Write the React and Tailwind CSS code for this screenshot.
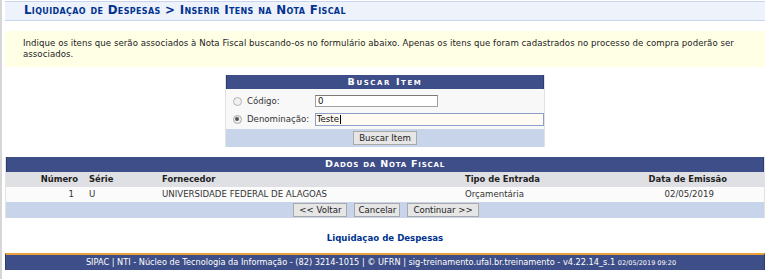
export default function App() {
  const font = "font-['DejaVu_Sans',Verdana,sans-serif]";
  const btn = "h-[14px] border border-[#a9a9a9] bg-[#e6e6e6] text-[8.6px] text-[#222] leading-none";
  return (
    <div className={`relative w-[768px] h-[279px] bg-white ${font} text-[8.6px] text-[#222] overflow-hidden`}>
      <div className="absolute left-0 top-0 bottom-0 w-[2px] bg-[#d6d6d6]" />
      <div className="pl-[5px] pr-[3px] pt-[1px]">
        {/* Title bar */}
        <div className="h-[20px] border-y border-[#c9d5ee] bg-[#eef2fb] flex items-center pl-[19px]">
          <span className="text-[#003390] font-bold [font-variant:small-caps] text-[11.8px] tracking-[0.35px]">
            Liquidaçao de Despesas &gt; Inserir Itens na Nota Fiscal
          </span>
        </div>
        {/* Info box */}
        <div className="mt-[10px] h-[36px] bg-[#ffffe6] pl-[18px] pr-[22px] pt-[7px] leading-[11px] text-[#222] tracking-[0.05px]">
          Indique os itens que serão associados à Nota Fiscal buscando-os no formulário abaixo. Apenas os itens que foram cadastrados no processo de compra poderão ser associados.
        </div>
        {/* Buscar Item */}
        <div className="mt-[8px] mx-auto w-[320px] border-x border-[#e2e2e2]">
          <div className="h-[14px] bg-[#3e4e88] border-x border-[#2e3b6e] flex items-center justify-center text-white font-bold [font-variant:small-caps] text-[9.5px] tracking-[1.6px]">
            Buscar Item
          </div>
          <div className="bg-[#f8f8f8] pt-[6px] pb-[4px]">
            <div className="flex items-center h-[12px]">
              <div className="ml-[7px] w-[9px] h-[9px] rounded-full border border-[#b4b4b4] bg-[#f0f0f0]" />
              <span className="ml-[5px] w-[68px] text-[#333]">Código:</span>
              <div className="w-[123px] h-[12px] border border-[#a0a0a0] border-t-[#7a7a7a] bg-white flex items-center pl-[2px] text-[#111]">0</div>
            </div>
            <div className="flex items-center h-[12px] mt-[6px]">
              <div className="ml-[7px] w-[9px] h-[9px] rounded-full border border-[#a8a8a8] bg-[#eeeeee] flex items-center justify-center">
                <div className="w-[4px] h-[4px] rounded-full bg-[#555]" />
              </div>
              <span className="ml-[5px] w-[68px] text-[#333]">Denominação:</span>
              <div className="w-[230px] h-[13px] border border-[#8aa0c8] bg-[#fffaf2] flex items-center pl-[1px] text-[#111]">
                Teste<span className="w-px h-[9px] bg-black ml-px" />
              </div>
            </div>
          </div>
          <div className="h-[18px] bg-[#c8d4ea] flex items-center justify-center">
            <button className={`${btn} px-[5px]`}>Buscar Item</button>
          </div>
        </div>
        {/* Dados da Nota Fiscal */}
        <div className="mt-[10px] border-x border-[#e2e2e2]">
          <div className="h-[15px] bg-[#3e4e88] border-x border-[#2e3b6e] flex items-center justify-center text-white font-bold [font-variant:small-caps] text-[9.5px] tracking-[0.8px]">
            Dados da Nota Fiscal
          </div>
          <div className="h-[15px] bg-[#dfe0e4] flex items-center font-bold text-[8.4px] text-[#222]">
            <div className="w-[72px] text-right">Número</div>
            <div className="w-[84px] pl-[11px]">Série</div>
            <div className="w-[303px]">Fornecedor</div>
            <div className="w-[180px]">Tipo de Entrada</div>
            <div className="flex-1 text-right pr-[37px]">Data de Emissão</div>
          </div>
          <div className="h-[15px] bg-[#fbfbfb] flex items-center text-[#333]">
            <div className="w-[72px] text-right pr-[4px]">1</div>
            <div className="w-[84px] pl-[11px]">U</div>
            <div className="w-[303px]">UNIVERSIDADE FEDERAL DE ALAGOAS</div>
            <div className="w-[180px]">Orçamentária</div>
            <div className="flex-1 text-right pr-[50px]">02/05/2019</div>
          </div>
          <div className="h-[16px] bg-[#c8d4ea] flex items-center justify-center gap-[7px] pl-[2px]">
            <button className={`${btn} h-[13px] px-[5px]`}>&lt;&lt; Voltar</button>
            <button className={`${btn} h-[13px] px-[3px]`}>Cancelar</button>
            <button className={`${btn} h-[13px] px-[5px]`}>Continuar &gt;&gt;</button>
          </div>
        </div>
        {/* Link */}
        <div className="h-[35px] flex items-center justify-center pt-[6px]">
          <span className="font-bold text-[#003390] text-[8.6px]">Liquidaçao de Despesas</span>
        </div>
        {/* Footer */}
        <div className="border-t-2 border-[#e8a03a] h-[17px] bg-[#3e4e88] border-x border-x-[#2e3b6e] flex items-center justify-center pr-[8px] text-white text-[8.2px]">
          <span>
            SIPAC | NTI - Núcleo de Tecnologia da Informação - (82) 3214-1015 | © UFRN | sig-treinamento.ufal.br.treinamento - v4.22.14_s.1{" "}
            <span className="text-[6.5px]">02/05/2019 09:20</span>
          </span>
        </div>
      </div>
    </div>
  );
}
